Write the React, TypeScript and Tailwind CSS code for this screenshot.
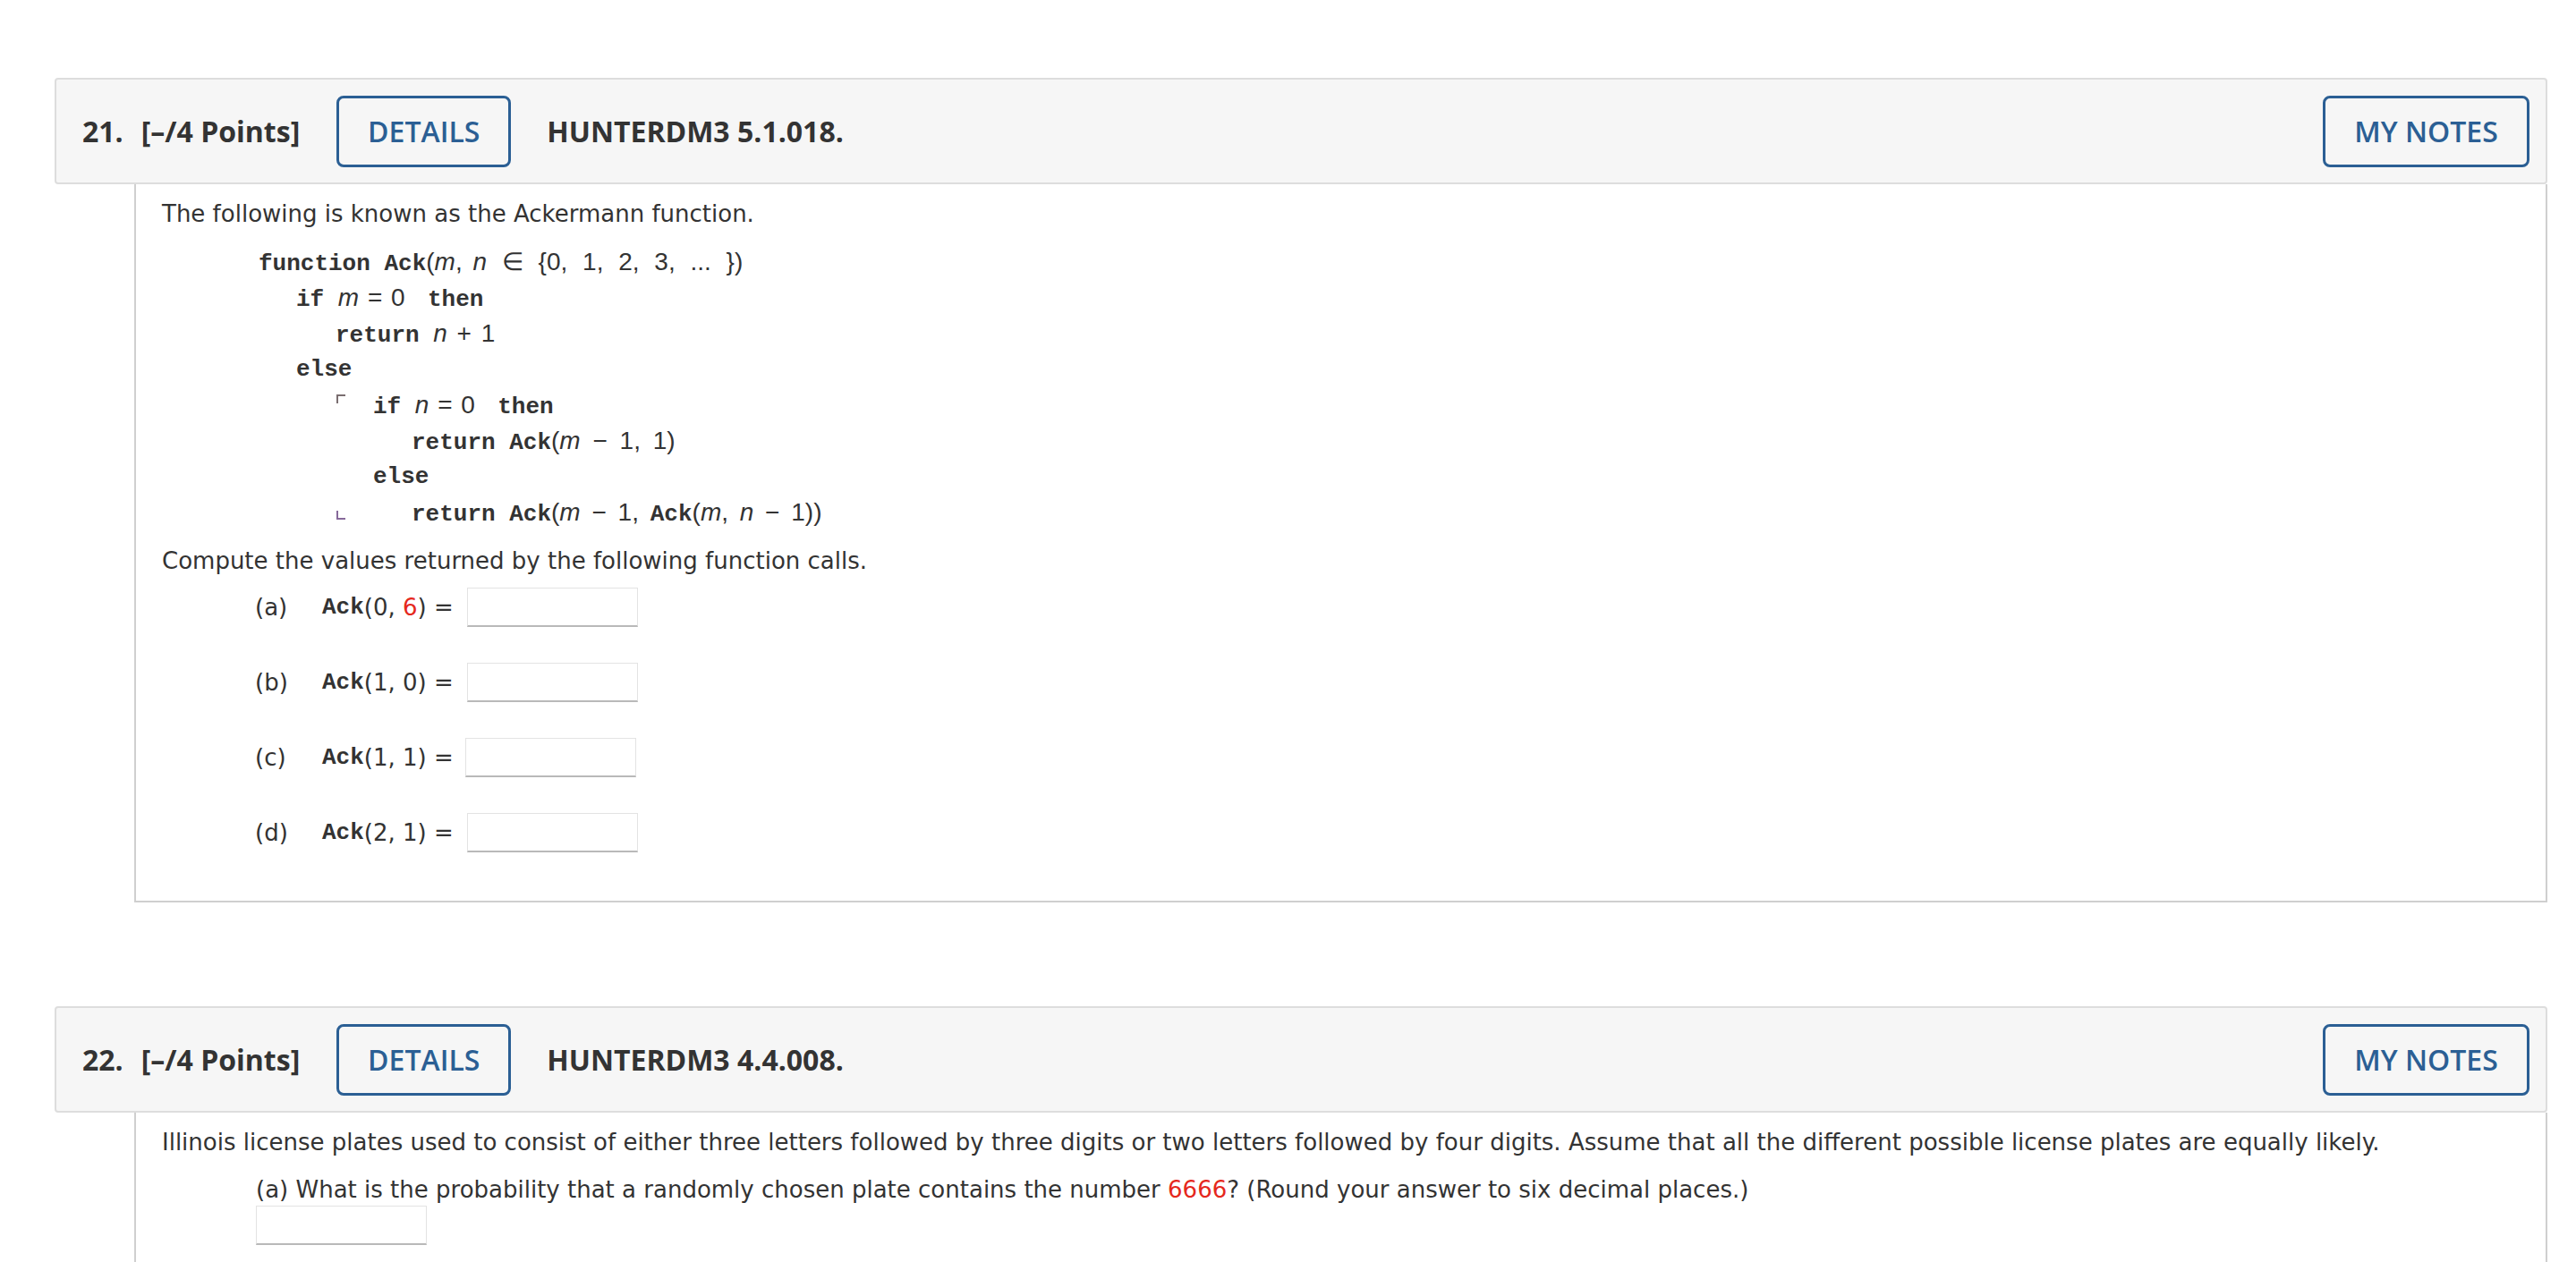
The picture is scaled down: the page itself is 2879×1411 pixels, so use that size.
import type { ReactNode } from "react";

const mono = "font-['Liberation_Mono',monospace] font-bold text-[26px]";
const math = "font-['Liberation_Sans',Arial,sans-serif] text-[28px] font-normal";

function QuestionHeader({ num, code }: { num: number; code: string }) {
  return (
    <div className="flex h-[119px] items-center rounded-[4px] border-2 border-[#dddddd] bg-[#f6f6f6] pl-[29px] pr-[18px] font-['Open_Sans',sans-serif] text-[32px] font-bold text-[#333333]">
      <span>{num}.</span>
      <span className="ml-[20px]">[–/4 Points]</span>
      <button className="ml-[41px] h-[80px] w-[195px] rounded-[8px] border-[3px] border-[#2b5f94] text-[32px] font-semibold text-[#2b5f94]">
        DETAILS
      </button>
      <span className="ml-[40px]">{code}</span>
      <button className="ml-auto h-[80px] w-[231px] rounded-[8px] border-[3px] border-[#2b5f94] text-[32px] font-semibold text-[#2b5f94]">
        MY NOTES
      </button>
    </div>
  );
}

function Answer({ className = "" }: { className?: string }) {
  return (
    <div
      className={
        "h-[44px] w-[191px] border border-[#e3e3e3] border-b-2 border-b-[#b9b9b9] bg-white " +
        className
      }
    />
  );
}

function CodeLine({ indent, children }: { indent: string; children: ReactNode }) {
  return <div className={"h-[40px] whitespace-pre leading-[40px] " + indent}>{children}</div>;
}

function Corner({ top }: { top: boolean }) {
  return (
    <span className={"flex h-[40px] w-[41px] shrink-0 " + (top ? "pt-[8px]" : "pt-[18px]")}>
      <svg width="10" height="10" viewBox="0 0 10 10">
        {top ? (
          <path d="M1 10V1H10" fill="none" stroke="#7a6e70" strokeWidth="2" />
        ) : (
          <path d="M1 0V9H10" fill="none" stroke="#86699a" strokeWidth="2" />
        )}
      </svg>
    </span>
  );
}

// math text inside the pseudo code; ws sets the operator spacing
function T({ children, ws = "[word-spacing:2px]" }: { children: ReactNode; ws?: string }) {
  return <span className={math + " " + ws}>{children}</span>;
}

function M({ children }: { children: ReactNode }) {
  return <span className={math + " italic"}>{children}</span>;
}

function AckRow({ label, args, box }: { label: string; args: ReactNode; box?: string }) {
  return (
    <div className="flex h-[44px] items-center pl-[104px]">
      <span className="w-[75px]">{label}</span>
      <span className={mono}>Ack</span>
      <span>{args}</span>
      <Answer className={box ?? "ml-[15px]"} />
    </div>
  );
}

export default function App() {
  return (
    <div className="min-h-screen bg-white pl-[61px] pr-[32px] pt-[87px] font-['DejaVu_Sans',Verdana,sans-serif] text-[26px] text-[#333333]">
      {/* question 21 */}
      <section>
        <QuestionHeader num={21} code="HUNTERDM3 5.1.018." />
        <div className="ml-[89px] border-x-2 border-b-2 border-[#cfcfcf] pb-[54px] pl-[29px] pt-[13px]">
          <p className="leading-[40px]">The following is known as the Ackermann function.</p>

          <div className={"mt-[14px] " + mono}>
            <CodeLine indent="pl-[108px]">
              function Ack<T>(</T>
              <M>m</M>
              <T ws="[word-spacing:4px]">, </T>
              <M>n</M>
              <T ws="[word-spacing:9px]"> ∈ {"{"}0, 1, 2, 3, ... {"}"})</T>
            </CodeLine>
            <CodeLine indent="pl-[150px]">
              if <M>m</M>
              <T> = 0 </T> then
            </CodeLine>
            <CodeLine indent="pl-[194px]">
              return <M>n</M>
              <T ws="[word-spacing:3px]"> + 1</T>
            </CodeLine>
            <CodeLine indent="pl-[150px]">else</CodeLine>
            <div className="flex h-[40px] pl-[195px]">
              <Corner top />
              <span className="whitespace-pre leading-[40px]">
                if <M>n</M>
                <T> = 0 </T> then
              </span>
            </div>
            <CodeLine indent="pl-[279px]">
              return Ack<T>(</T>
              <M>m</M>
              <T ws="[word-spacing:6px]"> − 1, 1)</T>
            </CodeLine>
            <CodeLine indent="pl-[236px]">else</CodeLine>
            <div className="flex h-[40px] pl-[195px]">
              <Corner top={false} />
              <span className="whitespace-pre pl-[43px] leading-[40px]">
                return Ack<T>(</T>
                <M>m</M>
                <T ws="[word-spacing:5px]"> − 1, </T>Ack<T>(</T>
                <M>m</M>
                <T ws="[word-spacing:5px]">, </T>
                <M>n</M>
                <T ws="[word-spacing:5px]"> − 1))</T>
              </span>
            </div>
          </div>

          <p className="mt-[14px] leading-[40px]">Compute the values returned by the following function calls.</p>

          <div className="mt-[10px] flex flex-col gap-[40px]">
            <AckRow
              label="(a)"
              args={
                <span className="whitespace-pre">
                  (0, <span className="text-[#e5281d]">6</span>) =
                </span>
              }
            />
            <AckRow label="(b)" args={<span className="whitespace-pre">(1, 0) =</span>} />
            <AckRow label="(c)" args={<span className="whitespace-pre">(1, 1) =</span>} box="ml-[13px]" />
            <AckRow label="(d)" args={<span className="whitespace-pre">(2, 1) =</span>} />
          </div>
        </div>
      </section>

      {/* question 22 */}
      <section className="mt-[116px]">
        <QuestionHeader num={22} code="HUNTERDM3 4.4.008." />
        <div className="ml-[89px] border-x-2 border-[#cfcfcf] pb-[120px] pl-[29px] pt-[13px]">
          <p className="leading-[40px]">
            Illinois license plates used to consist of either three letters followed by three digits or two letters
            followed by four digits. Assume that all the different possible license plates are equally likely.
          </p>
          <p className="mt-[15px] pl-[105px] leading-[36px]">
            (a) What is the probability that a randomly chosen plate contains the number{" "}
            <span className="text-[#e5281d]">6666</span>? (Round your answer to six decimal places.)
          </p>
          <Answer className="ml-[105px] w-[190px]" />
        </div>
      </section>
    </div>
  );
}
